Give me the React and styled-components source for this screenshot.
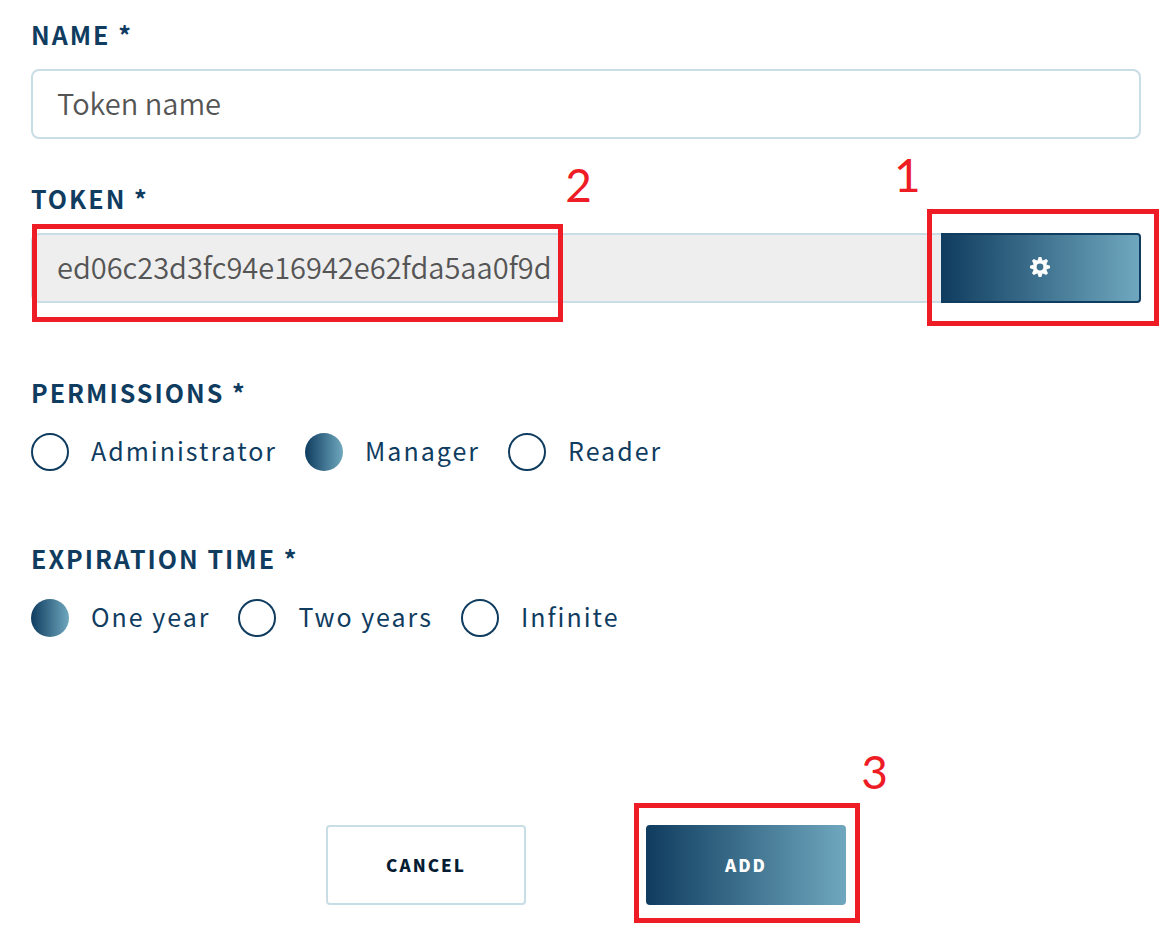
import React from "react";
import styled, { createGlobalStyle, css } from "styled-components";

const navy = "#0f3c5f";
const paleBlue = "#c8dde5";
const red = "#ee1c25";
const gradient = `linear-gradient(90deg, ${navy} 0%, #6fa8be 100%)`;
const sans = `"Noto Sans CJK JP", "Open Sans", sans-serif`;

const GlobalStyle = createGlobalStyle`
  *, *::before, *::after { box-sizing: border-box; }
  body { margin: 0; background: #fff; color: ${navy}; font-family: ${sans}; }
`;

const Form = styled.form`
  display: flex;
  flex-direction: column;
  padding: 16px 35px 29px 31px;
`;

const titleStyle = css`
  display: block;
  padding: 0;
  font-size: 25px;
  font-weight: 700;
  line-height: 36px;
  letter-spacing: 2px;
  text-transform: uppercase;
`;

const Field = styled.div`
  display: flex;
  flex-direction: column;
  gap: 17px;
  margin-bottom: ${(p) => p.$after}px;
`;

const Title = styled.label`
  ${titleStyle}
`;

const ChoiceSet = styled.fieldset`
  min-width: 0;
  margin: 0 0 ${(p) => p.$after}px;
  padding: 0;
  border: 0;
`;

const Legend = styled.legend`
  ${titleStyle}
  margin-bottom: 23px;
`;

const TextInput = styled.input`
  flex: 1 1 auto;
  width: 100%;
  min-width: 0;
  height: 70px;
  padding: 0 24px 4px;
  border: 2px solid ${paleBlue};
  border-radius: 8px;
  background: ${(p) => (p.readOnly ? "#eeeeee" : "#ffffff")};
  color: #555;
  font-family: ${sans};
  font-size: 29px;
  font-weight: 350;
  outline: none;

  &::placeholder { color: #555; opacity: 1; }
`;

const InputGroup = styled.div`
  position: relative;
  display: flex;

  ${TextInput} {
    border-right: 0;
    border-radius: 8px 0 0 8px;
  }
`;

const GenerateButton = styled.button`
  display: flex;
  flex: 0 0 200px;
  align-items: center;
  justify-content: center;
  padding: 0 0 2px;
  border: 2px solid ${navy};
  border-left: 0;
  border-radius: 0 4px 4px 0;
  background: ${gradient};
  color: #fff;
  cursor: pointer;
`;

const Choices = styled.div`
  display: flex;
  flex-wrap: wrap;
  gap: 28px;
`;

const Choice = styled.label`
  display: flex;
  align-items: flex-start;
  gap: 22px;
  height: 38px;
  font-size: 25px;
  font-weight: 400;
  line-height: 34px;
  letter-spacing: 2px;
  cursor: pointer;
`;

const Radio = styled.input`
  appearance: none;
  flex: none;
  width: 38px;
  height: 38px;
  margin: 0;
  border: 2px solid ${navy};
  border-radius: 50%;
  background: #fff;
  cursor: pointer;

  &:checked { border: 0; background: ${gradient}; }
`;

const Actions = styled.div`
  display: flex;
  justify-content: center;
  gap: 120px;
`;

const ActionSlot = styled.div`
  position: relative;
`;

const ActionButton = styled.button`
  width: 200px;
  height: 80px;
  padding: 0 0 2px;
  border: ${(p) => (p.$primary ? "0" : `2px solid ${paleBlue}`)};
  border-radius: 4px;
  background: ${(p) => (p.$primary ? gradient : "#ffffff")};
  color: ${(p) => (p.$primary ? "#ffffff" : "#061c33")};
  font-family: ${sans};
  font-size: 17px;
  font-weight: 900;
  letter-spacing: 2px;
  text-transform: uppercase;
  cursor: pointer;
`;

const Highlight = styled.div`
  position: absolute;
  border: 5px solid ${red};
  pointer-events: none;
`;

const TokenHighlight = styled(Highlight)`
  top: -9px;
  left: 1px;
  width: 531px;
  height: 98px;
`;

const GenerateHighlight = styled(Highlight)`
  top: -24px;
  right: -18px;
  width: 232px;
  height: 117px;
`;

const AddHighlight = styled(Highlight)`
  top: -22px;
  left: -12px;
  width: 226px;
  height: 120px;
`;

const Step = styled.span`
  position: absolute;
  color: ${red};
  font-family: Lato, sans-serif;
  font-size: 46px;
  line-height: 48px;
`;

const TokenStep = styled(Step)`
  top: -68px;
  right: -34px;
`;

const GenerateStep = styled(Step)`
  top: -63px;
  left: -38px;
`;

const AddStep = styled(Step)`
  top: -60px;
  right: -33px;
`;

function GearIcon() {
  return (
    <svg width="20" height="20" viewBox="-10 -10 20 20" fill="currentColor" aria-hidden="true">
      <circle r="5.2" fill="none" stroke="currentColor" strokeWidth="3.6" />
      {[0, 45, 90, 135, 180, 225, 270, 315].map((angle) => (
        <path key={angle} d="M-2.6 -6.2 L-1.3 -10 H1.3 L2.6 -6.2 Z" transform={`rotate(${angle})`} />
      ))}
    </svg>
  );
}

function RadioGroup({ title, name, options, selected, after }) {
  return (
    <ChoiceSet $after={after}>
      <Legend>{title} *</Legend>
      <Choices>
        {options.map((option) => (
          <Choice key={option}>
            <Radio type="radio" name={name} value={option} defaultChecked={option === selected} />
            {option}
          </Choice>
        ))}
      </Choices>
    </ChoiceSet>
  );
}

export default function App() {
  return (
    <>
      <GlobalStyle />
      <Form onSubmit={(e) => e.preventDefault()}>
        <Field $after={41}>
          <Title htmlFor="name">Name *</Title>
          <TextInput id="name" type="text" placeholder="Token name" />
        </Field>
        <Field $after={71}>
          <Title htmlFor="token">Token *</Title>
          <InputGroup>
            <TextInput id="token" type="text" readOnly value="ed06c23d3fc94e16942e62fda5aa0f9d" />
            <GenerateButton type="button" aria-label="Generate token">
              <GearIcon />
            </GenerateButton>
            <TokenHighlight>
              <TokenStep>2</TokenStep>
            </TokenHighlight>
            <GenerateHighlight>
              <GenerateStep>1</GenerateStep>
            </GenerateHighlight>
          </InputGroup>
        </Field>
        <RadioGroup
          title="Permissions"
          name="permissions"
          options={["Administrator", "Manager", "Reader"]}
          selected="Manager"
          after={69}
        />
        <RadioGroup
          title="Expiration time"
          name="expiration"
          options={["One year", "Two years", "Infinite"]}
          selected="One year"
          after={188}
        />
        <Actions>
          <ActionButton type="button">Cancel</ActionButton>
          <ActionSlot>
            <ActionButton type="submit" $primary>Add</ActionButton>
            <AddHighlight>
              <AddStep>3</AddStep>
            </AddHighlight>
          </ActionSlot>
        </Actions>
      </Form>
    </>
  );
}
